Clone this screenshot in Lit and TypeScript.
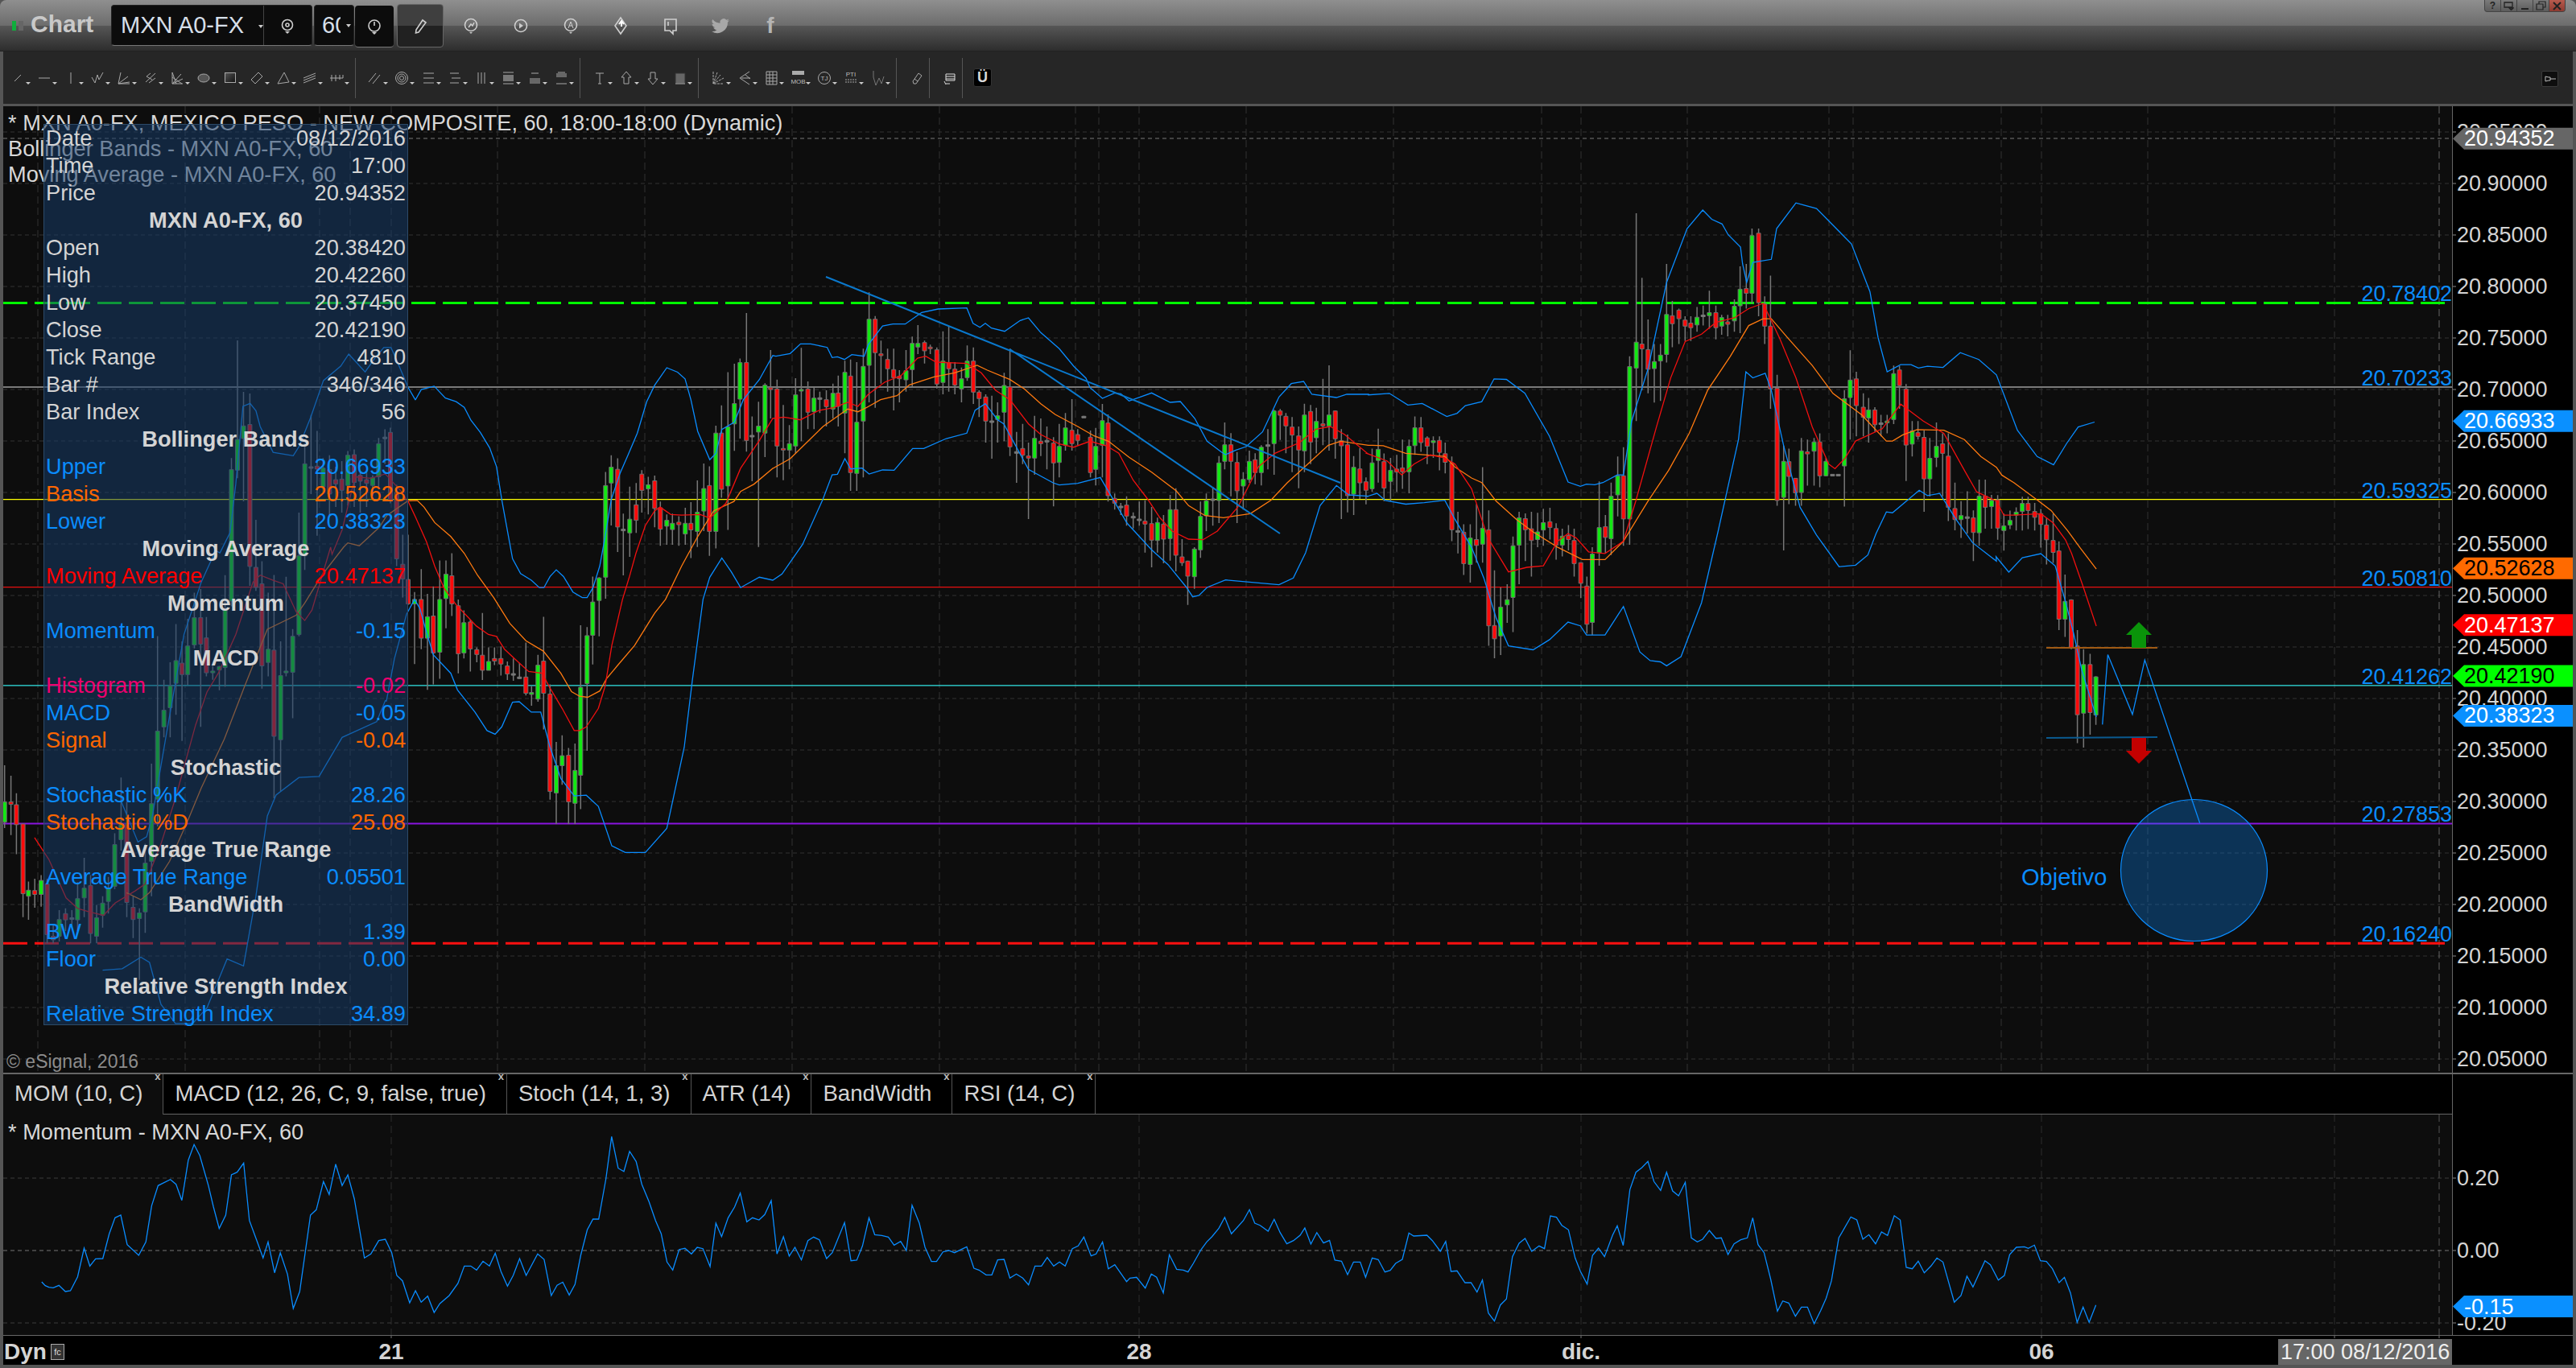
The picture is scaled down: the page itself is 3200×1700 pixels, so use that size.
import { LitElement, html, svg, css } from "lit";
import { customElement } from "lit/decorators.js";

// candles are traced from crops of the chart, each list keeps the crop's own scale
type Bar = { c: string; x: number; t: number; b: number; wt: number; wb: number };

const bars = (bx: number, by: number, sx: number, sy: number, s: string): Bar[] =>
  s.trim().split(/\s+/).map((tok) => {
    const [x, t, b, wt, wb] = tok.slice(1).split(",").map(Number);
    return { c: tok[0], x: bx + x / sx, t: by + t / sy, b: by + b / sy, wt: by + wt / sy, wb: by + wb / sy };
  });

const trace = (bx: number, by: number, sx: number, sy: number, s: string): string =>
  s.trim().split(/\s+/).map((p) => {
    const [x, y] = p.split(",").map(Number);
    return `${(bx + x / sx).toFixed(1)},${(by + y / sy).toFixed(1)}`;
  }).join(" ");

const Z2 = [0, 130, 2.8, 2.8] as const;
const Z3 = [0, 680, 2.8, 2.306] as const;
const Z4 = [2400, 600, 1.96, 2.613] as const;
const Z8 = [900, 300, 1.96, 3] as const;
const Z9 = [480, 350, 3, 2.178] as const;
const Z10 = [1680, 240, 1.96, 2.613] as const;

const CANDLES: Bar[] = [
  ...bars(...Z3, `g16,730,788,625,805 r38,730,737,655,825 r57,738,795,705,880 r80,793,993,793,1060 g99,983,1000,958,1068
    r121,984,995,950,1033 g143,955,995,940,1030 r164,965,1110,950,1135 r185,1115,1125,1080,1135 g206,1067,1115,1040,1130
    r228,1050,1068,1035,1100 s250,1062,1064,1040,1090 g270,1007,1068,960,1100 g293,977,1005,890,1060 r315,970,1107,940,1135
    g336,1062,1115,1025,1135 g357,1020,1055,1000,1090 g377,977,1015,945,1050 g399,852,972,820,980 g421,795,838,660,870
    r441,795,1018,730,1060 r463,1032,1067,1000,1120 g485,1048,1064,1035,1240 g505,905,1045,850,1105 g527,735,900,620,1000
    g548,527,722,255,800 g570,467,515,380,545 g592,397,460,330,545 g612,325,390,220,480 r633,332,365,270,555
    g653,283,365,205,395 g676,202,280,130,290 r698,202,278,120,515 r718,260,360,200,370 g740,355,360,340,380
    g763,342,352,340,410 g783,180,345,80,400`),
  ...bars(...Z2, `g805,1270,1728,1230,1746 g826,1165,1272,820,1300 g847,1118,1162,1000,1380 r869,1113,1607,1005,1674
    r890,1610,1680,1445,1692 r911,1667,1953,1589,2032 g933,1895,1941,1698,1989 r953,1898,2198,1637,2414 g976,1987,2210,1868,2390
    g995,1971,1977,1643,1989 g1018,1850,1975,1825,2135 g1040,1570,1844,1420,1850 g1060,1250,1570,1180,1619 s1082,1260,1262,1080,1355
    r1103,1258,1268,1135,1500 g1124,1265,1330,1230,1350 r1146,1270,1355,1220,1430 r1168,1305,1320,1260,1400 r1189,1303,1342,1240,1420
    g1210,1220,1325,1205,1395 r1232,1218,1315,1200,1400 r1253,1290,1310,1280,1420 r1275,1305,1318,1280,1400 g1296,1298,1325,1290,1360
    g1317,1180,1295,1160,1330 s1339,1157,1160,1130,1250`),
  ...bars(...Z9, `r15,408,590,395,600 r38,570,750,550,770 r61,765,805,685,855 r81,806,872,685,875 g105,860,872,840,1035 r130,860,965,778,995
    g153,907,965,845,1105 r175,905,1005,825,1090 g199,860,1003,755,1075 g222,792,858,755,938 r244,796,872,735,905
    r268,877,1007,860,1060 g289,923,1005,890,1020 r313,921,994,915,1055 r337,996,1009,990,1030 r358,1011,1052,897,1078
    g381,1028,1052,990,1052 r403,1020,1027,990,1038 r427,1020,1035,987,1066 r451,1040,1062,1028,1078 s473,1061,1063,1020,1080
    s496,1070,1072,1032,1075 r520,1070,1114,977,1120 g541,1112,1117,1095,1148 g565,1038,1130,1010,1137 r586,1027,1114,907,1212
    r610,1116,1380,1090,1402 g633,1310,1384,1246,1468 g655,1283,1310,1228,1362 r679,1282,1408,1262,1468 g703,1323,1412,1250,1468
    g724,1098,1336,930,1428 g748,958,1088,935,1270 g769,867,957,798,1036 g793,802,863,800,960 g817,552,800,515,858
    g838,502,545,470,660 r862,508,664,478,732 s883,670,672,628,795 g907,643,680,555,745 r931,604,646,545,680
    r952,521,565,510,625 g976,550,561,528,630 r1000,539,614,525,665 r1021,612,670,595,715 g1045,646,662,630,712
    g1066,654,671,628,712 r1090,651,658,635,715 g1114,654,683,612,712 r1135,654,672,597,748 g1159,624,676,538,718
    g1183,560,621,492,675 r1204,552,676,500,742 g1228,410,676,390,722 r1249,410,562,335,585 g1273,393,553,245,672
    g1297,330,385,222,458 g1318,219,318,208,425 r1342,219,430,85,460 s1363,416,418,365,540 g1387,391,407,325,718
    g1411,280,410,275,475 r1432,287,292,185,370`),
  ...bars(...Z8, `r128,550,763,515,880 r143,772,778,610,890 g158,754,778,685,850 g173,572,763,510,790 g187,552,558,397,745
    r203,550,637,522,700 g218,584,635,540,700 s232,583,586,560,640 r248,590,616,555,690 g264,566,625,530,660 r277,565,615,500,690
    g293,488,640,445,790 r307,502,862,440,930 g322,674,865,450,930 g338,466,670,400,880 g352,290,462,190,600 r367,290,415,278,620
    r381,419,426,370,530 r397,440,475,400,560 r412,478,508,400,630 r426,503,512,480,600 g442,482,516,405,560 g457,380,478,355,540
    g471,380,394,312,420 r487,377,408,370,455 r501,394,400,385,420 r517,404,532,395,548 g532,446,526,335,570 r546,452,475,315,560
    r561,476,536,450,570 g577,512,550,470,600 g591,446,508,388,520 r606,446,562,395,606 r620,562,586,555,655 r636,580,670,570,750
    s651,669,672,575,810 g665,650,664,600,750 g681,537,637,490,745 r695,542,766,400,800 s711,784,787,710,900 r726,772,797,680,830
    r740,800,808,750,1035 g755,734,808,650,870 r770,745,754,660,800 s785,742,745,690,850 r801,752,826,730,988 g815,764,824,680,880
    g830,695,760,640,780 r846,704,754,588,780 r860,720,742,700,760 s875,652,655,650,655 r891,730,862,705,880 g904,764,850,695,910
    g920,668,760,606,880 r934,677,948,645,970 r950,958,976,940,1000 s965,987,990,975,1020 r979,983,1024,950,1060 s995,1025,1028,1010,1070
    s1010,1035,1038,970,1060 r1024,1043,1054,965,1160 r1040,1052,1114,990,1215 g1054,1048,1115,1030,1160 r1069,1054,1110,1020,1200
    g1085,1000,1108,945,1190 r1099,1000,1170,920,1230 r1114,1176,1198,1110,1210 r1128,1192,1248,1190,1355 g1144,1147,1250,1140,1295
    g1159,1025,1150,970,1180 g1173,967,1022,940,1080 s1189,960,963,915,1060 g1204,826,966,800,1050 g1218,758,820,675,850
    r1233,758,820,715,950 r1248,824,930,785,1050 g1263,887,912,860,1000 g1278,820,888,780,900 r1292,814,862,790,905
    g1307,767,862,760,910 s1323,758,763,700,850 g1338,632,754,628,870 r1353,632,648,625,740 r1367,652,688,640,790
    r1382,692,722,655,860 r1398,725,778,690,920 g1412,647,781,605,860 r1427,634,748,610,830 g1441,671,732,620,790
    r1457,680,688,512,760 g1472,647,688,462,780 r1487,632,736,630,810 r1502,743,762,700,1035 r1517,758,948,720,1010
    g1532,842,942,800,1020 r1547,848,900,770,960 r1562,896,928,880,980`),
  ...bars(...Z10, `g48,876,960,830,970 g63,832,868,765,940 r77,872,958,845,1000 g93,900,936,860,1000 r108,896,906,850,970
    r122,892,905,800,960 g138,822,905,800,975 g152,762,820,725,850 r167,762,810,727,840 r182,795,822,790,880 g197,804,810,790,860
    r212,803,842,790,900 r226,846,874,810,910 r242,876,1093,855,1130 s257,1096,1099,1035,1170 r271,1101,1203,1075,1240
    g287,1120,1206,1075,1265 r302,1125,1144,1010,1200 g317,1088,1140,890,1200 r332,1093,1405,1030,1470 r346,1404,1447,1225,1510
    g361,1344,1438,1280,1500 g377,1320,1337,1270,1395 g391,1145,1313,1115,1425 g406,1054,1143,1035,1270 r421,1057,1093,1040,1195
    r436,1090,1128,1035,1245 g451,1100,1125,1038,1150 g465,1070,1094,1025,1145 r481,1067,1086,1022,1125 r496,1089,1143,1072,1190
    g511,1114,1143,1090,1180 r526,1112,1125,1078,1160 r540,1128,1203,1090,1245 r556,1200,1267,1200,1315 r571,1276,1400,1245,1430
    g584,1172,1394,1150,1435 g601,1086,1168,936,1210 r616,1083,1118,1045,1170 g630,984,1122,940,1175 g646,918,980,855,1050
    r660,918,1058,825,1145 g675,563,1058,530,1142 g691,484,568,65,740 r705,490,506,275,640 r720,508,572,410,650
    g735,547,570,490,680 g750,526,545,490,675 g765,394,524,230,550 r779,398,424,350,500 r795,380,408,375,490
    r810,412,432,400,480 r824,422,437,400,480 g839,403,428,370,450 s854,396,399,365,430 g869,388,398,317,440
    r885,388,437,365,475 g899,404,432,395,460 r914,418,426,395,465 g930,367,415,345,450 g944,312,366,238,455
    r959,310,325,230,375 g973,138,325,115,360 r989,130,356,115,400 r1004,360,432,335,490 r1018,432,636,268,700
    r1034,634,998,590,1015 g1050,871,988,820,1160 r1063,872,920,830,1010 r1079,926,973,925,1015 g1093,837,972,795,1015
    r1108,840,847,800,950 g1124,808,838,795,950 r1138,808,918,780,955 g1153,871,918,860,920 s1169,913,916,913,916
    s1183,913,916,913,916 g1198,668,886,640,1018 g1212,607,664,510,800 r1227,603,690,580,790 r1244,695,728,650,790
    g1257,704,730,665,810 r1272,704,752,695,775 s1287,746,749,720,790 g1302,740,746,720,780 g1318,586,735,560,750
    r1332,574,625,562,700 r1348,636,818,620,935 g1363,772,815,740,855 r1377,778,790,740,800 r1392,793,928,770,1035
    g1406,861,928,795,985 g1422,822,858,745,890 r1437,814,845,780,985 r1451,854,1020,780,1065 r1467,1024,1060,940,1095
    g1482,1047,1060,1000,1120 s1497,1051,1054,968,1105 r1512,1054,1102,1030,1195 g1526,984,1103,930,1145 r1541,984,1020,930,1090
    g1556,998,1018,980,1090`),
  ...bars(...Z4, `r160,55,147,40,185 g175,140,155,100,220 g190,122,137,90,150 g205,95,105,80,155 g220,67,93,45,155
    r234,67,90,45,150 r250,93,112,65,155 r265,100,135,85,210 r279,137,185,115,265 r295,187,226,100,260
    r309,221,443,190,478 g324,385,443,298,500 r339,380,535,378,540 r354,530,753,478,845 g369,590,748,540,860
    r385,590,746,555,818 g399,630,754,628,786`),
];

const UPPER = [
  trace(...Z3, "420,725 480,845 510,830 530,770 580,530 640,250 700,100 750,10"),
  trace(...Z2, "765,1560 800,1490 820,1320 845,1050 870,1040 890,1065 905,1120 950,1210 1020,1222 1040,1190 1080,1090 1125,960 1185,910 1213,868 1270,930 1305,880 1335,845 1360,845 1380,890 1420,985 1445,1028"),
  trace(...Z9, "108,320 130,292 178,283 220,315 260,325 290,340 315,375 350,408 385,450 410,500 430,590 445,650 470,750 500,790 540,808 570,828 587,828 610,798 633,780 660,798 695,840 730,855 748,855 770,828 795,770 815,690 838,590 870,520 900,470 935,410 970,325 1000,280 1045,233 1085,245 1113,263 1135,320 1160,405 1205,482 1228,465 1250,400 1297,380 1330,320 1390,265 1440,200"),
  trace(...Z8, "125,428 160,418 185,382 210,382 250,395 262,433 275,430 292,440 310,422 340,428 350,385 385,315 410,308 440,308 480,265 520,252 590,248 605,305 622,320 635,305 650,323 682,335 720,295 740,285 770,340 815,400 850,465 880,510 890,545 920,585 950,565 965,568 985,595 1040,565 1085,600 1110,597 1145,660 1175,745 1210,785 1220,795 1245,778 1270,765 1310,710 1350,580 1380,530 1410,522 1430,570 1490,582 1515,570 1568,570"),
  trace(...Z10, "39,655 90,650 135,688 170,683 230,725 255,715 275,690 315,677 345,603 375,605 420,650 480,790 525,938 555,952 570,945 590,947 610,940 645,915 660,915 680,740 720,570 765,290 815,115 853,55 875,85 900,100 915,135 945,175 950,230 960,290 975,225 1020,215 1033,115 1080,32 1130,50 1215,165 1260,320 1280,470 1302,580 1335,557 1360,557 1378,568 1400,562 1438,566 1480,518 1525,540 1568,590"),
  trace(0, 0, 0.49, 0.49, "1228,262 1240,278 1250,283 1258,270 1265,260 1275,257"),
].join(" ");

const LOWER = [
  trace(...Z3, "357,1212 425,1208 490,1175 520,1190 560,1310 610,1365 670,1365 720,1320 790,1180 847,1200 890,1000 930,770 960,710 1040,660 1110,657 1190,545 1310,500 1340,440"),
  trace(...Z9, "0,1135 30,1020 75,900 105,860 125,885 150,950 175,1010 240,1060 265,1105 330,1165 375,1215 405,1225 430,1205 470,1138 495,1137 540,1165 575,1165 610,1260 650,1345 700,1392 745,1390 790,1420 840,1527 890,1545 965,1545 1045,1480 1110,1260 1140,1080 1180,860 1205,800 1250,748 1285,785 1320,828 1390,800 1440,808"),
  trace(...Z8, "140,1240 190,1130 240,960 262,870 275,868 293,810 307,848 335,845 352,867 385,852 413,853 458,772 485,772 540,735 590,715 610,630 635,605 665,665 680,680 740,850 800,900 815,908 860,902 915,880 980,1050 1040,1150 1080,1205 1125,1290 1140,1325 1155,1320 1175,1290 1220,1262 1350,1280 1385,1255 1415,1160 1450,985 1490,910 1520,945 1568,950"),
  trace(...Z10, "35,985 60,975 80,998 130,1010 175,1005 225,997 250,1060 290,1150 320,1250 350,1380 380,1470 440,1483 480,1450 525,1393 555,1405 570,1435 615,1435 660,1342 700,1490 725,1518 750,1522 765,1535 800,1505 850,1330 890,1100 940,800 958,580 975,600 1005,585 1020,640 1050,820 1090,1020 1130,1110 1185,1213 1225,1208 1255,1175 1275,1105 1300,1035 1315,1038 1340,1010 1380,965 1400,982 1430,975 1470,1060 1510,1135 1568,1195"),
  trace(...Z4, "156,240 187,290 220,243 265,230 300,270 325,385 345,490 365,610 400,760"),
].join(" ");

const MA = [
  trace(...Z3, "120,832 170,895 230,1005 270,1035 310,1045 360,1055 400,1020 470,985 505,965 560,850 610,720 680,510 720,415 760,360 820,250 880,100 905,80 950,95 985,105 1030,185 1060,210 1085,180 1150,0"),
  trace(...Z2, "1155,1565 1190,1480 1235,1295 1290,1300 1340,1285 1395,1345 1420,1385"),
  trace(...Z9, "80,593 110,640 150,705 180,770 215,830 260,875 300,905 335,932 380,955 410,960 440,995 480,1022 530,1055 580,1060 610,1100 655,1155 700,1215 720,1215 745,1205 790,1155 815,1095 840,985 880,860 905,800 930,735 965,660 1000,620 1020,610 1060,630 1100,632 1170,630 1205,640 1265,600 1320,505 1390,430 1440,370"),
  trace(...Z8, "118,660 145,655 185,665 230,630 265,620 300,600 325,615 350,570 390,525 430,500 470,435 490,428 515,450 590,455 625,490 660,555 695,590 740,680 770,720 815,755 850,767 890,745 930,762 960,790 995,890 1030,960 1060,1030 1090,1080 1130,1110 1165,1112 1200,1080 1250,990 1300,840 1340,790 1400,750 1440,700 1475,690 1510,720 1565,790"),
  trace(...Z10, "35,845 85,870 120,915 150,880 190,850 225,860 250,880 290,960 330,1120 380,1230 425,1215 465,1210 500,1130 525,1105 545,1120 575,1165 615,1170 660,1130 690,1000 740,760 775,600 810,482 850,458 885,420 930,405 965,375 1000,358 1040,470 1080,600 1120,760 1160,880 1175,895 1200,860 1225,805 1290,765 1335,685 1390,740 1440,780 1490,900 1520,970 1568,1000"),
  trace(...Z4, "175,105 200,105 265,100 295,130 325,185 340,230 370,345 400,465"),
].join(" ");

const BASIS = [
  trace(...Z3, "440,990 490,1010 520,990 590,900 650,790 700,690 780,550 850,400 930,235 1030,195 1060,160 1120,80 1195,0"),
  trace(...Z2, "1210,1525 1250,1535 1320,1470 1345,1430 1420,1378"),
  trace(...Z9, "80,593 115,592 140,610 180,652 240,690 290,735 340,795 400,855 460,925 520,972 585,1000 650,1060 690,1110 720,1122 750,1125 795,1108 820,1075 860,1040 925,985 1000,897 1040,860 1100,770 1160,690 1220,620 1295,595 1320,568 1370,548 1440,505"),
  trace(...Z8, "118,846 160,810 200,750 240,690 300,625 325,635 345,620 380,590 420,575 450,535 510,505 560,490 615,462 640,480 695,515 730,550 770,605 805,645 860,690 900,725 935,745 985,805 1040,860 1100,930 1130,985 1170,1022 1215,1030 1280,1015 1330,965 1370,900 1420,830 1470,760 1500,745 1568,760"),
  trace(...Z10, "35,818 75,820 130,845 180,850 225,855 250,890 290,925 315,940 350,1000 400,1060 440,1100 500,1150 560,1190 615,1190 660,1130 720,1000 770,900 820,780 865,640 920,530 965,430 1000,408 1020,408 1060,470 1120,560 1170,650 1240,720 1300,805 1315,805 1340,785 1375,768 1440,770 1490,800 1530,855 1568,890"),
  trace(...Z4, "170,-25 200,0 250,50 290,90 330,155 360,210 400,280"),
].join(" ");

const MOMENTUM = [
  trace(0, 1300, 1.12, 3, `58,879 63,893 68,899 74,901 82,892 91,915 98,912 108,860 117,753 125,820 133,793 143,792 152,700 160,640 168,630 177,740 193,780 203,730 211,595 220,520 237,497 245,515 253,575 262,425 270,367 278,408 290,520 297,600 305,680 314,630 322,480 330,470 339,436 347,650 358,730 366,790 373,730 382,845 390,770 400,850 408,978 417,915 432,630 440,610 450,505 458,553 467,440 476,520 484,480 493,570 507,790 516,775 527,725 536,720 545,770 552,855 560,875 570,957 578,912 586,955 595,932 604,993 612,960 625,930 637,885 646,820 655,820 663,835 672,802 681,820 689,772 697,840 706,895 714,855 723,792 732,855 748,775 757,795 767,930 775,892 783,880 792,928 800,888 808,780 817,685 825,645 833,645 843,495 851,337 860,455 868,467 876,392 885,430 893,515 903,580 912,650 920,700 928,805 936,835 945,758 953,754 962,775 970,750 978,755 988,822 996,660 1004,710 1013,640 1022,600 1030,548 1039,655 1047,640 1056,648 1064,628 1073,576 1081,775 1090,710 1098,783 1106,750 1115,797 1124,725 1132,712 1140,722 1150,792 1158,770 1175,658 1184,800 1192,798 1200,745 1209,640 1217,703 1227,706 1236,712 1244,742 1253,728 1261,762 1269,593 1279,660 1287,750 1296,803 1303,803 1312,767 1320,762 1328,770 1345,748 1355,828 1362,835 1372,853 1380,853 1388,797 1397,795 1405,865 1414,850 1423,865 1431,890 1440,820 1449,820 1457,788 1466,820 1474,805 1482,820 1492,755 1500,745 1508,712 1518,782 1525,775 1534,730 1542,830 1551,815`),
  trace(1300, 1380, 1.206, 3, `120,638 125,625 135,622 148,662 157,610 165,622 175,680 184,538 195,592 205,595 212,602 220,570 232,517 240,490 248,470 258,440 267,398 277,460 295,410 304,370 312,420 320,428 332,450 341,406 350,455 360,497 370,485 380,465 387,438 396,498 405,455 415,494 424,484 432,558 442,562 451,612 460,565 470,565 478,622 488,550 497,556 507,602 515,596 523,570 533,555 543,457 550,468 570,465 578,485 590,525 598,488 606,600 615,598 627,642 636,642 645,677 653,632 662,755 671,785 680,725 689,703 698,545 708,495 717,477 727,525 738,505 746,515 755,393 764,398 772,428 782,445 792,550 800,600 810,647 818,540 827,513 836,545 848,465 855,430 864,503 874,295 883,230 892,213 901,190 910,265 920,298 929,230 938,300 947,318 957,268 966,475 975,490 983,480 993,447 1003,477 1011,475 1021,537 1030,497 1040,482 1050,475 1058,400 1066,500 1075,530 1085,630 1095,748 1103,710 1112,718 1122,767 1131,733 1140,733 1150,795 1160,745 1168,700 1176,635 1187,475 1205,397 1214,408 1223,480 1232,463 1242,497 1251,453 1260,466 1270,392 1279,408 1288,585 1297,590 1306,562 1315,605 1325,580 1334,550 1343,565 1360,715 1370,690 1379,618 1388,658 1406,560 1414,575 1426,632 1435,615 1443,537 1453,510 1465,508 1471,514 1480,502 1489,560 1498,563 1507,590 1517,642 1525,622 1534,680 1544,790 1553,733 1562,790`),
  trace(2400, 1300, 1.96, 3, "399,965"),
].join(" ");

const priceY = (p: number) => 228 + (20.9 - p) * 1280;
const GRID_X = [47, 230, 397, 435, 486, 618, 801, 984, 1167, 1336, 1365, 1415, 1548, 1731, 1915, 1964, 2096, 2272, 2302, 2486, 2536, 2668, 2900];
const LOWER_GRID_X = [486, 1415, 1964, 2536, 2900];
const PRICES = Array.from({ length: 19 }, (_, i) => 20.95 - i * 0.05);

const LEVELS = [
  { p: 20.78402, color: "#00ff00", w: 3, dash: "30 9" },
  { p: 20.70233, color: "#e6e6e6", w: 1.2 },
  { p: 20.59325, color: "#ffff00", w: 1.2 },
  { p: 20.5081, color: "#e81010", w: 1.2 },
  { p: 20.41262, color: "#33e6e6", w: 1.2 },
  { p: 20.27853, color: "#8a14e0", w: 2 },
  { p: 20.1624, color: "#ff1010", w: 3, dash: "30 9" },
];

const TAGS = [
  { p: 20.94352, bg: "#666666", fg: "#ffffff" },
  { p: 20.66933, bg: "#0a90ff", fg: "#ffffff" },
  { p: 20.52628, bg: "#ff6a00", fg: "#000000" },
  { p: 20.47137, bg: "#ff0000", fg: "#ffffff" },
  { p: 20.4219, bg: "#00ff00", fg: "#000000" },
  { p: 20.38323, bg: "#0a90ff", fg: "#ffffff" },
];

const rowsH = "h";
const ROWS: [string, string?, string?][] = [
  ["Date", "08/12/2016"], ["Time", "17:00"], ["Price", "20.94352"], ["MXN A0-FX, 60", undefined, rowsH],
  ["Open", "20.38420"], ["High", "20.42260"], ["Low", "20.37450"], ["Close", "20.42190"], ["Tick Range", "4810"],
  ["Bar #", "346/346"], ["Bar Index", "56"], ["Bollinger Bands", undefined, rowsH],
  ["Upper", "20.66933", "blue"], ["Basis", "20.52628", "orange"], ["Lower", "20.38323", "blue"],
  ["Moving Average", undefined, rowsH], ["Moving Average", "20.47137", "red"],
  ["Momentum", undefined, rowsH], ["Momentum", "-0.15", "blue"], ["MACD", undefined, rowsH],
  ["Histogram", "-0.02", "pink"], ["MACD", "-0.05", "blue"], ["Signal", "-0.04", "orange"],
  ["Stochastic", undefined, rowsH], ["Stochastic %K", "28.26", "blue"], ["Stochastic %D", "25.08", "orange"],
  ["Average True Range", undefined, rowsH], ["Average True Range", "0.05501", "blue"],
  ["BandWidth", undefined, rowsH], ["BW", "1.39", "blue"], ["Floor", "0.00", "blue"],
  ["Relative Strength Index", undefined, rowsH], ["Relative Strength Index", "34.89", "blue"],
];

const TABS = ["MOM (10, C)", "MACD (12, 26, C, 9, false, true)", "Stoch (14, 1, 3)", "ATR (14)", "BandWidth", "RSI (14, C)"];

// drawing tools, one group per separator
const ic = (p: unknown) => html`<svg class="ico" width="26" height="26" viewBox="0 0 26 26">${p}</svg>`;
const TOOLS_A = [
  svg`<path d="M9 17L17 9"/>`,
  svg`<path d="M6 13H20"/>`,
  svg`<path d="M13 6V20"/>`,
  svg`<path d="M6 12L10 19L13 9L15 15L20 6"/>`,
  svg`<path d="M6 20L9 6M6 20L18 11M6 20L20 18M6 20H20"/>`,
  svg`<path d="M7 18L19 7M8 11L13 7M8 11L15 15M11 19L19 13"/>`,
  svg`<path d="M7 6L12 20M7 20L18 8M7 20L20 14M7 20H20M7 20V6M7 12L19 20"/>`,
  svg`<ellipse cx="13" cy="13" rx="7" ry="5" fill="#555"/>`,
  svg`<rect x="6.5" y="6.5" width="13" height="12" fill="url(#fade)"/>`,
  svg`<path d="M6 15L15 6L20 11L11 20Z"/>`,
  svg`<path d="M14 6L20 18L6 20Z"/>`,
  svg`<path d="M5 13L20 7M5 16L20 10M5 19L20 13"/>`,
  svg`<path d="M5 13H21M7 9V17M12 9V17M17 9V15M21 9V13"/>`,
];
const TOOLS_B = [
  svg`<path d="M5 18L14 7M10 20L19 9"/>`,
  svg`<circle cx="13" cy="13" r="7.5"/><circle cx="13" cy="13" r="5"/><circle cx="13" cy="13" r="2.5"/>`,
  svg`<path d="M7 7H20M7 13H20M7 19H20"/>`,
  svg`<path d="M7 7H18M9 13H20M7 19H18"/>`,
  svg`<path d="M9 6V20M13 6V20M17 6V20"/>`,
  svg`<rect x="7" y="9" width="13" height="8" fill="#777" stroke="none"/><path d="M7 6H20M7 20H20"/>`,
  svg`<path d="M9 7H18M7 14H20M7 19H20"/><rect x="7" y="15" width="13" height="3" fill="#666" stroke="none"/>`,
  svg`<path d="M9 6H18M7 11H20M7 20H20"/><rect x="7" y="7" width="13" height="3" fill="#666" stroke="none"/>`,
];
const TOOLS_C = [
  svg`<path d="M8 7H18M13 7V20M11 20H15"/>`,
  svg`<path d="M13 5L19 12H16V20H10V12H7Z"/>`,
  svg`<path d="M13 21L19 14H16V6H10V14H7Z"/>`,
  svg`<path d="M8 7H20V20H8Z" fill="#666" stroke="#333"/><path d="M8 20H20" />`,
];
const TOOLS_D = [
  svg`<path d="M7 5V20H20M7 20L12 6M7 20L16 9M7 20L20 13" stroke-dasharray="3 1"/>`,
  svg`<path d="M19 5L7 13L19 21M9 13H20M14 9L20 14"/>`,
  svg`<path d="M7 5H20V21H7ZM7 9H20M7 13H20M7 17H20M11 5V21M15 5V21"/>`,
  svg`<rect x="6" y="4" width="15" height="5" fill="#aaa" stroke="none"/><text class="mini" x="13.5" y="20" text-anchor="middle">MOB</text>`,
  svg`<circle cx="13" cy="13" r="7.5"/><text class="mini" x="13" y="16" text-anchor="middle">TJ</text>`,
  svg`<text class="mini" x="13" y="11" text-anchor="middle">PTI</text><path d="M6 15H20M6 18H20" stroke-dasharray="2 1"/>`,
  svg`<path d="M8 4V12L11 22L15 13L18 20L21 11" stroke="#777"/>`,
];

const tool = (p: unknown, drop = true) => html`<div class="tool">${ic(p)}${drop ? html`<i class="drop"></i>` : ""}</div>`;

@customElement("app-root")
export class AppRoot extends LitElement {
  static styles = css`
    :host {
      display: block;
      width: 3200px;
      height: 1700px;
      background: #555;
      font-family: "Liberation Sans", Arial, sans-serif;
      color: #d4d4d4;
      font-size: 27.2px;
      overflow: hidden;
    }
    svg { display: block; }
    svg text { font-family: "Liberation Sans", Arial, sans-serif; }

    .titlebar {
      height: 63px;
      display: flex;
      align-items: center;
      padding-left: 15px;
      border-radius: 8px 8px 0 0;
      background: linear-gradient(#8f8f8f 0, #6c6c6c 32px, #565656 32px, #2d2d2d 63px);
      border-bottom: 1px solid #222;
      position: relative;
    }
    .leds { width: 23px; display: flex; gap: 3px; }
    .leds i { width: 5px; height: 12px; background: #0fae3c; }
    .leds i + i { width: 6px; background: #666; }
    .app-name { width: 100px; font-size: 30px; font-weight: bold; color: #c9c9c9; margin-top: -4px; }
    .symbol, .interval {
      height: 51px;
      background: #0c0c0c;
      border-radius: 4px;
      border: 1px solid #222;
      border-bottom-color: #777;
      box-sizing: border-box;
      display: flex;
      align-items: center;
      position: relative;
      font-size: 29px;
      color: #d6dfe8;
    }
    .symbol { width: 250px; padding-left: 11px; }
    .symbol span { width: 178px; }
    .symbol .gear { width: 60px; height: 100%; border-left: 1px solid #444; display: flex; align-items: center; justify-content: center; }
    .interval { width: 50px; margin-left: 2px; padding-left: 9px; }
    .interval span { width: 23px; overflow: hidden; }
    .clock {
      width: 48px;
      height: 51px;
      margin: 3px 0 0 1px;
      background: #0c0c0c;
      border-radius: 4px;
      border-bottom: 1px solid #777;
      display: flex;
      align-items: center;
      justify-content: center;
    }
    .pencil {
      width: 58px;
      height: 54px;
      margin-left: 4px;
      box-sizing: border-box;
      border: 1px solid #666;
      border-radius: 4px;
      background: linear-gradient(#3f3f3f 50%, #212121 50%);
      display: flex;
      align-items: center;
      justify-content: center;
    }
    .top-icons { display: flex; margin-left: 3px; }
    .top-icons div { width: 62px; display: flex; justify-content: center; align-items: center; }
    .fb { font-size: 28px; font-weight: bold; color: #b5b5b5; line-height: 26px; }
    .caret { position: absolute; width: 0; height: 0; border: 3px solid transparent; border-top: 4px solid #ccc; border-bottom: 0; }
    .top-ico { fill: none; stroke: #cfcfcf; stroke-width: 1.6; }
    .winbtns {
      position: absolute;
      top: 0;
      right: 13px;
      display: flex;
      height: 14px;
      border: 1px solid #444;
      border-top: 0;
      border-radius: 0 0 4px 4px;
      background: linear-gradient(#7b7b7b, #5c5c5c);
      overflow: hidden;
    }
    .winbtns div { width: 19px; border-left: 1px solid #444; display: flex; justify-content: center; align-items: center; font-size: 12px; font-weight: bold; color: #222; }
    .winbtns div:first-child { border-left: 0; }
    .winbtns .close { background: linear-gradient(#b85b4e, #8e3a30); }

    .toolbar {
      height: 65px;
      margin: 0 4px;
      padding-left: 1px;
      background: #262626;
      display: flex;
      align-items: center;
      position: relative;
    }
    .tool { width: 33px; height: 30px; display: flex; align-items: center; justify-content: center; position: relative; }
    .ico { fill: none; stroke: #a8a8a8; stroke-width: 1; }
    .mini { font-size: 8px; fill: #bbb; stroke: none; }
    .drop { position: absolute; left: 27px; top: 20px; width: 0; height: 0; border: 3px solid transparent; border-top: 3px solid #ccc; border-bottom: 0; }
    .sep { width: 1px; height: 50px; background: #555; margin: 0 7px; }
    .sep.tight { margin-left: 0; }
    .magnet {
      width: 23px;
      height: 23px;
      margin-left: 6px;
      background: #000;
      border-radius: 3px;
      border: 1px solid #333;
      box-sizing: border-box;
      display: flex;
      align-items: center;
      justify-content: center;
      color: #d8d8d8;
      font-weight: bold;
      font-size: 18px;
    }
    .pin {
      position: absolute;
      right: 18px;
      top: 24px;
      width: 19px;
      height: 18px;
      background: #0e0e0e;
      border: 1px solid #3a3a3a;
      border-radius: 2px;
      display: flex;
      align-items: center;
      justify-content: center;
    }

    .body { margin: 3px 4px 0; background: #000; }
    .row { display: flex; }
    .pane { position: relative; width: 3042px; background: #0d0d0d; }
    .axis { width: 149px; border-left: 1px solid #666; background: #000; }
    .main { height: 1201px; }
    .hsep { height: 2px; background: #666; }

    .legend { position: absolute; left: 6px; top: 5px; line-height: 32px; color: #d8d8d8; white-space: nowrap; }
    .copy { position: absolute; left: 4px; bottom: 0; font-size: 23px; line-height: 28px; color: #8c8c8c; }

    .panel {
      position: absolute;
      left: 50px;
      top: 22px;
      width: 453px;
      height: 1120px;
      box-sizing: border-box;
      padding: 0 2px;
      background: rgba(24, 61, 106, 0.54);
      border: 1px solid #2c4a68;
      display: grid;
      grid-template-columns: 1fr auto;
      grid-template-rows: repeat(33, 34px);
      align-items: center;
      line-height: 1;
    }
    .panel .head { grid-column: 1 / span 2; text-align: center; font-weight: bold; }
    .panel .val { text-align: right; }
    .blue { color: #0a8cff; }
    .orange { color: #ff6600; }
    .red { color: #ff0000; }
    .pink { color: #f0006e; }

    .tabs-row { height: 50px; }
    .tabs { width: 3042px; display: flex; height: 49px; border-bottom: 1px solid #666; background: #000; }
    .tab { position: relative; padding: 0 25px 0 14px; border-right: 1px solid #555; line-height: 48px; white-space: nowrap; font-size: 27.6px; }
    .tab.active { padding-right: 25px; margin-bottom: -1px; background: #0d0d0d; height: 50px; }
    .tab b { position: absolute; right: 3px; top: -10px; font-size: 13px; font-weight: bold; color: #bbb; line-height: 26px; }
    .tabs-fill { width: 149px; border-left: 1px solid #666; background: #000; }

    .lower { height: 274px; }
    .lower .legend { top: 6px; }
    .vsep { height: 1px; background: #666; }
    .time { height: 36px; background: #000; }

    .t-axis { font-size: 27px; fill: #d4d4d4; }
    .t-level { font-size: 27px; fill: #0a8cff; }
    .t-time { font-size: 28px; fill: #d4d4d4; font-weight: bold; }
    .t-stamp { font-size: 27px; fill: #eee; }
    .t-goal { font-size: 29px; fill: #0a8cff; }
    .foot { height: 4px; }
  `;

  private titleBar() {
    return html`<div class="titlebar">
      <div class="leds"><i></i><i></i></div>
      <div class="app-name">Chart</div>
      <div class="symbol">
        <span>MXN A0-FX</span>
        <i class="caret" style="left:182px;top:24px"></i>
        <div class="gear">
          <svg class="top-ico" width="26" height="26" viewBox="0 0 26 26"><circle cx="13" cy="12" r="6.5"/><circle cx="13" cy="12" r="2"/><path d="M10 20L13 23L16 20Z" fill="#ccc" stroke="none"/></svg>
        </div>
      </div>
      <div class="interval"><span>60</span></div>
      <i class="caret" style="left:430px;top:30px"></i>
      <div class="clock">
        <svg class="top-ico" width="26" height="26" viewBox="0 0 26 26"><circle cx="13" cy="12" r="7"/><path d="M13 7V12"/><path d="M10 20L13 23L16 20Z" fill="#ccc" stroke="none"/></svg>
      </div>
      <div class="pencil">
        <svg class="top-ico" width="26" height="26" viewBox="0 0 26 26"><path d="M8 18L16 6L20 9L11 21L7.5 22Z"/></svg>
      </div>
      <div class="top-icons">
        <div><svg class="top-ico" width="28" height="28" viewBox="0 0 28 28"><circle cx="14" cy="13" r="7.5"/><path d="M11 16L14 12L16 14L18 10"/><path d="M12 22L14 24L16 22Z" fill="#ccc" stroke="none"/></svg></div>
        <div><svg class="top-ico" width="28" height="28" viewBox="0 0 28 28"><circle cx="14" cy="14" r="7.5"/><path d="M12 10.5L17 14L12 17.5Z" fill="#ccc" stroke="none"/></svg></div>
        <div><svg class="top-ico" width="28" height="28" viewBox="0 0 28 28"><circle cx="14" cy="13" r="7.5"/><path d="M11 17L14 9L17 17M12 14H16" stroke-width="1"/><path d="M12 22L14 24L16 22Z" fill="#ccc" stroke="none"/></svg></div>
        <div><svg class="top-ico" width="28" height="28" viewBox="0 0 28 28"><path d="M14 4L21 14L14 24L7 14Z"/><path d="M15 8V15M12 12L15 8L18 12" stroke="#fff" stroke-width="2"/></svg></div>
        <div><svg class="top-ico" width="28" height="28" viewBox="0 0 28 28"><path d="M7 6H21V20H17V24L13 20H7Z"/><path d="M11 9V14" /></svg></div>
        <div><svg width="26" height="26" viewBox="0 0 24 24" fill="#a8a8a8"><path d="M22 5.8a8.5 8.5 0 0 1-2.4.7 4.2 4.2 0 0 0 1.8-2.3 8.4 8.4 0 0 1-2.6 1 4.2 4.2 0 0 0-7.2 3.8A11.9 11.9 0 0 1 3 4.6a4.2 4.2 0 0 0 1.3 5.6 4.2 4.2 0 0 1-1.9-.5 4.2 4.2 0 0 0 3.4 4.1 4.2 4.2 0 0 1-1.9.1 4.2 4.2 0 0 0 3.9 2.9A8.4 8.4 0 0 1 2 18.5a11.9 11.9 0 0 0 18.3-10.6A8.5 8.5 0 0 0 22 5.8z"/></svg></div>
        <div class="fb">f</div>
      </div>
      <div class="winbtns">
        <div>?</div>
        <div><svg width="13" height="11" viewBox="0 0 13 11" fill="none" stroke="#222" stroke-width="1.3"><path d="M1 1H11V7H1ZM7 8H12L9.5 10.5Z"/></svg></div>
        <div><svg width="11" height="11" viewBox="0 0 11 11" stroke="#222" stroke-width="2"><path d="M1 9H10"/></svg></div>
        <div><svg width="13" height="12" viewBox="0 0 13 12" fill="none" stroke="#222" stroke-width="1.2"><path d="M1 4H9V11H1ZM4 4V1H12V8H9"/></svg></div>
        <div class="close"><svg width="11" height="11" viewBox="0 0 11 11" stroke="#222" stroke-width="2"><path d="M1 1L10 10M10 1L1 10"/></svg></div>
      </div>
    </div>`;
  }

  private toolBar() {
    return html`<div class="toolbar">
      <svg width="0" height="0"><defs><linearGradient id="fade" x1="0" y1="0" x2="1" y2="1"><stop offset="0" stop-color="#555"/><stop offset="1" stop-color="#111"/></linearGradient></defs></svg>
      ${TOOLS_A.map((p) => tool(p))}<div class="sep"></div>
      ${TOOLS_B.map((p) => tool(p))}<div class="sep"></div>
      ${TOOLS_C.map((p) => tool(p))}<div class="sep"></div>
      ${TOOLS_D.map((p) => tool(p))}<div class="sep"></div>
      ${tool(svg`<path d="M9 17L16 7L20 10L13 20H10Z M11 14L15 17"/>`, false)}<div class="sep tight"></div>
      ${tool(svg`<path d="M9 8H20V16H9ZM9 11H20M9 14H20" stroke="#ddd"/><path d="M9 20H14M7 17L9 21" stroke="#ddd"/>`, false)}<div class="sep tight"></div>
      <div class="magnet">Ü</div>
      <div class="pin"><svg width="14" height="10" viewBox="0 0 14 10" fill="none" stroke="#bbb"><path d="M1 2L5 3H7V7H5L1 8ZM7 5H14"/></svg></div>
    </div>`;
  }

  private chart() {
    const wicks = CANDLES.map((b) => `M${b.x.toFixed(1)} ${b.wt.toFixed(1)}V${b.wb.toFixed(1)}`).join("");
    const body = (c: string) =>
      CANDLES.filter((b) => b.c === c)
        .map((b) => `M${(b.x - 2.5).toFixed(1)} ${b.t.toFixed(1)}h5V${Math.max(b.b, b.t + 2).toFixed(1)}h-5Z`)
        .join("");
    return html`<svg width="3042" height="1201" viewBox="4 132 3042 1201">
      ${PRICES.map((p) => svg`<path d="M4 ${priceY(p)}H3046" stroke="#333" stroke-dasharray="5 4" fill="none"/>`)}
      ${GRID_X.map((x) => svg`<path d="M${x} 132V1333" stroke="#333" stroke-dasharray="9 5" fill="none"/>`)}
      <path d="M4 172H3046" stroke="#7a7a7a" stroke-dasharray="5 4" fill="none"/>
      <path d="M3030 132V1333" stroke="#666" stroke-dasharray="9 5" fill="none"/>
      ${LEVELS.map((l) => svg`<path d="M4 ${priceY(l.p)}H${l.dash ? 3037 : 3046}" stroke=${l.color} stroke-width=${l.w} stroke-dasharray=${l.dash ?? "none"} fill="none"/>`)}
      <path d=${wicks} stroke="#777" stroke-width="1.5" fill="none"/>
      <path d=${body("g")} fill="#12e812" stroke="#6e6e6e"/>
      <path d=${body("r")} fill="#ff0a0a" stroke="#6e6e6e"/>
      <path d=${body("s")} fill="#777" stroke="#777"/>
      <g fill="none" stroke-width="1.3">
        <polyline points=${UPPER} stroke="#0a8cff"/>
        <polyline points=${LOWER} stroke="#0a8cff"/>
        <polyline points=${BASIS} stroke="#ff7a10"/>
        <polyline points=${MA} stroke="#f01010"/>
        <path d="M1026 344L1665 600M1254.6 434L1590 663" stroke="#0a78cc" stroke-width="2"/>
        <polyline points=${trace(...Z4, "415,785 428,558 488,752 518,575 652,1105")} stroke="#0a8cff"/>
        <path d="M2542 805H2680" stroke="#a05a14" stroke-width="2"/>
        <path d="M2542 917L2680 916" stroke="#0a5a90" stroke-width="2"/>
      </g>
      <path d="M2648 805V789H2641L2657 773L2673 789H2666V805Z" fill="#0a940a"/>
      <path d="M2648 917V933H2641L2657 949L2673 933H2666V917Z" fill="#c40000"/>
      <ellipse cx="2725.5" cy="1081.5" rx="91" ry="88" fill="#0a8cff" fill-opacity="0.3" stroke="#0a8cff" stroke-width="1.2"/>
      <text class="t-goal" x="2511" y="1090" dominant-baseline="central">Objetivo</text>
      ${LEVELS.map((l) => svg`<text class="t-level" x="3046" y=${priceY(l.p) - 11} text-anchor="end" dominant-baseline="central">${l.p.toFixed(5)}</text>`)}
    </svg>`;
  }

  private priceAxis() {
    return html`<svg width="149" height="1201" viewBox="3047 132 149 1201">
      ${PRICES.map((p) => svg`
        <path d="M3047 ${priceY(p)}H3051" stroke="#888"/>
        <text class="t-axis" x="3052" y=${priceY(p)} dominant-baseline="central">${p.toFixed(5)}</text>`)}
      ${TAGS.map((t) => {
        const y = priceY(t.p);
        return svg`<polygon points="3047,${y} 3061,${y - 13.5} 3196,${y - 13.5} 3196,${y + 13.5} 3061,${y + 13.5}" fill=${t.bg}/>
          <text class="t-axis" x="3061" y=${y} dominant-baseline="central" style="fill:${t.fg}">${t.p.toFixed(5)}</text>`;
      })}
    </svg>`;
  }

  private lowerPane() {
    return html`<svg width="3042" height="274" viewBox="4 1385 3042 274">
      ${LOWER_GRID_X.map((x) => svg`<path d="M${x} 1385V1659" stroke="#2c2c2c" stroke-dasharray="9 5" fill="none"/>`)}
      <path d="M3030 1385V1659" stroke="#555" stroke-dasharray="9 5" fill="none"/>
      <path d="M4 1464H3046M4 1644H3046" stroke="#3c3c3c" stroke-dasharray="5 4" fill="none"/>
      <path d="M4 1554H3046" stroke="#777" stroke-dasharray="5 4" fill="none"/>
      <polyline points=${MOMENTUM} fill="none" stroke="#0a8cff" stroke-width="1.3"/>
    </svg>`;
  }

  private lowerAxis() {
    return html`<svg width="149" height="274" viewBox="3047 1385 149 274">
      ${[[0.2, 1464, "0.20"], [0, 1554, "0.00"], [-0.2, 1644, "-0.20"]].map(([, y, t]) => svg`
        <path d="M3047 ${y}H3051" stroke="#888"/>
        <text class="t-axis" x="3052" y=${y} dominant-baseline="central">${t}</text>`)}
      <polygon points="3047,1623.5 3061,1610 3196,1610 3196,1637 3061,1637" fill="#0a90ff"/>
      <text class="t-axis" x="3061" y="1623.5" dominant-baseline="central" style="fill:#fff">-0.15</text>
    </svg>`;
  }

  private timeAxis() {
    const labels: [number, string][] = [[486, "21"], [1415, "28"], [1964, "dic."], [2536, "06"]];
    return html`<svg width="3192" height="36" viewBox="4 1660 3192 36">
      ${[486, 1415, 1964, 2536, 2900, 3030].map((x) => svg`<path d="M${x} 1660V1663" stroke="#777"/>`)}
      <text class="t-time" x="5" y="1679" dominant-baseline="central">Dyn</text>
      <rect x="63.5" y="1670.5" width="16" height="19" fill="#333" stroke="#aaa"/>
      <text x="71.5" y="1684" text-anchor="middle" font-size="11" fill="#ddd">fc</text>
      ${labels.map(([x, t]) => svg`<text class="t-time" x=${x} y="1679" text-anchor="middle" dominant-baseline="central">${t}</text>`)}
      <rect x="2830" y="1664" width="216" height="32" fill="#666"/>
      <text class="t-stamp" x="2833" y="1680" dominant-baseline="central">17:00 08/12/2016</text>
    </svg>`;
  }

  render() {
    return html`
      ${this.titleBar()}
      ${this.toolBar()}
      <div class="body">
        <div class="row main">
          <div class="pane">
            ${this.chart()}
            <div class="legend">
              <div>* MXN A0-FX, MEXICO PESO - NEW COMPOSITE, 60, 18:00-18:00 (Dynamic)</div>
              <div>Bollinger Bands - MXN A0-FX, 60</div>
              <div>Moving Average - MXN A0-FX, 60</div>
            </div>
            <div class="panel">
              ${ROWS.map(([label, value, tone]) =>
                tone === rowsH
                  ? html`<div class="head">${label}</div>`
                  : html`<div class=${tone ?? ""}>${label}</div><div class="val ${tone ?? ""}">${value}</div>`)}
            </div>
            <div class="copy">© eSignal, 2016</div>
          </div>
          <div class="axis">${this.priceAxis()}</div>
        </div>
        <div class="hsep"></div>
        <div class="row tabs-row">
          <div class="tabs">
            ${TABS.map((t, i) => html`<div class="tab ${i === 0 ? "active" : ""}">${t}<b>x</b></div>`)}
          </div>
          <div class="tabs-fill"></div>
        </div>
        <div class="row lower">
          <div class="pane">
            ${this.lowerPane()}
            <div class="legend"><div>* Momentum - MXN A0-FX, 60</div></div>
          </div>
          <div class="axis">${this.lowerAxis()}</div>
        </div>
        <div class="vsep"></div>
        <div class="time">${this.timeAxis()}</div>
      </div>
      <div class="foot"></div>
    `;
  }
}
